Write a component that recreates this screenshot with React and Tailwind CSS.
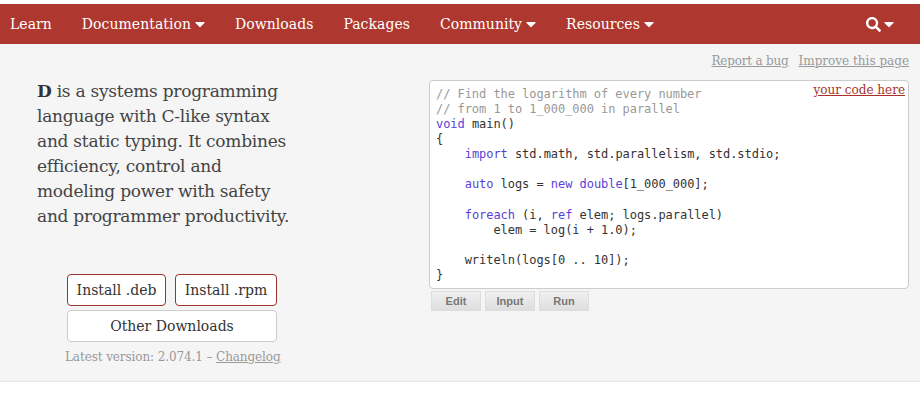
import { FaCaretDown, FaSearch } from "react-icons/fa";

const navItems = [
  { label: "Learn" },
  { label: "Documentation", caret: true },
  { label: "Downloads" },
  { label: "Packages" },
  { label: "Community", caret: true },
  { label: "Resources", caret: true },
];

function Header() {
  return (
    <nav className="h-10 mt-1 bg-[#ae3830] text-white flex items-center justify-between text-[14px] tracking-[0.04px] shrink-0">
      <ul className="flex items-center gap-[30px] pl-[10px]">
        {navItems.map((item) => (
          <li key={item.label} className="flex items-center gap-1">
            {item.label}
            {item.caret && <FaCaretDown className="w-[10px] h-[16px]" />}
          </li>
        ))}
      </ul>
      <div className="flex items-center gap-[3px] pr-[26px]">
        <FaSearch className="text-[15px]" />
        <FaCaretDown className="w-[10px] h-[16px]" />
      </div>
    </nav>
  );
}

function Intro() {
  return (
    <div className="w-[429px] pl-[37px] shrink-0">
      <p className="mt-px text-[17px] leading-[25px] tracking-[-0.25px] text-[#444] w-[256px]">
        <b className="text-[#333]">D</b>
        <span>
          {" "}
          is a systems programming language with C-like syntax and static typing. It combines efficiency, control and
          modeling power with safety and programmer productivity.
        </span>
      </p>
      <div className="w-[210px] ml-[30px] mt-[45px] text-[14px] text-[#333]">
        <div className="flex justify-between">
          <button className="w-[99px] h-[32px] bg-white border border-[#98342d] rounded">Install .deb</button>
          <button className="w-[102px] h-[32px] bg-white border border-[#98342d] rounded">Install .rpm</button>
        </div>
        <button className="w-full h-[32px] mt-[4px] bg-white border border-[#ccc] rounded">Other Downloads</button>
      </div>
      <p className="mt-[6px] ml-[28px] text-[12px] tracking-[-0.1px] text-[#999] whitespace-nowrap">
        <span>Latest version: 2.074.1 – </span>
        <span className="underline">Changelog</span>
      </p>
    </div>
  );
}

const kw = "text-[#5a3fd6]";

function Line({ children }) {
  return <div className="h-[15.08px] whitespace-pre">{children}</div>;
}

function Code() {
  return (
    <div className="w-[480px] mt-[2px]">
      <div className="relative h-[209px] bg-white border border-[#ccc] rounded-[4px] px-[6px] pt-[6px]">
        <a className="absolute right-[3px] top-0 text-[12px] text-[#a8322a] underline">your code here</a>
        <div className="font-['DejaVu_Sans_Mono',monospace] text-[12px] leading-[15.08px] tracking-[-0.05px] text-[#333]">
          <Line><span className="text-[#999]">// Find the logarithm of every number</span></Line>
          <Line><span className="text-[#999]">// from 1 to 1_000_000 in parallel</span></Line>
          <Line><span className={kw}>void</span> main()</Line>
          <Line>{"{"}</Line>
          <Line>{"    "}<span className={kw}>import</span> std.math, std.parallelism, std.stdio;</Line>
          <Line />
          <Line>{"    "}<span className={kw}>auto</span> logs = <span className={kw}>new</span> <span className={kw}>double</span>[1_000_000];</Line>
          <Line />
          <Line>{"    "}<span className={kw}>foreach</span> (i, <span className={kw}>ref</span> elem; logs.parallel)</Line>
          <Line>{"        elem = log(i + 1.0);"}</Line>
          <Line />
          <Line>{"    writeln(logs[0 .. 10]);"}</Line>
          <Line>{"}"}</Line>
        </div>
      </div>
      <div className="flex gap-1 mt-[2px] ml-[2px] font-['Liberation_Sans',sans-serif] text-[11px] font-bold text-[#777]">
        {["Edit", "Input", "Run"].map((b) => (
          <button key={b} className="w-[50px] h-[20px] border border-[#ddd] bg-gradient-to-b from-[#f0f0f0] to-[#dedede]">
            {b}
          </button>
        ))}
      </div>
    </div>
  );
}

export default function App() {
  return (
    <div className="w-[920px] h-[410px] bg-white flex flex-col overflow-hidden font-['Roboto_Slab','DejaVu_Serif',serif]">
      <Header />
      <main className="h-[338px] bg-[#f5f5f5] border-b border-[#e5e5e5] shrink-0">
        <div className="flex justify-end gap-[10px] pr-[11px] pt-[8px] text-[12px] text-[#999] h-[34px]">
          <span className="underline tracking-[-0.2px]">Report a bug</span>
          <span className="underline">Improve this page</span>
        </div>
        <div className="flex">
          <Intro />
          <Code />
        </div>
      </main>
    </div>
  );
}
